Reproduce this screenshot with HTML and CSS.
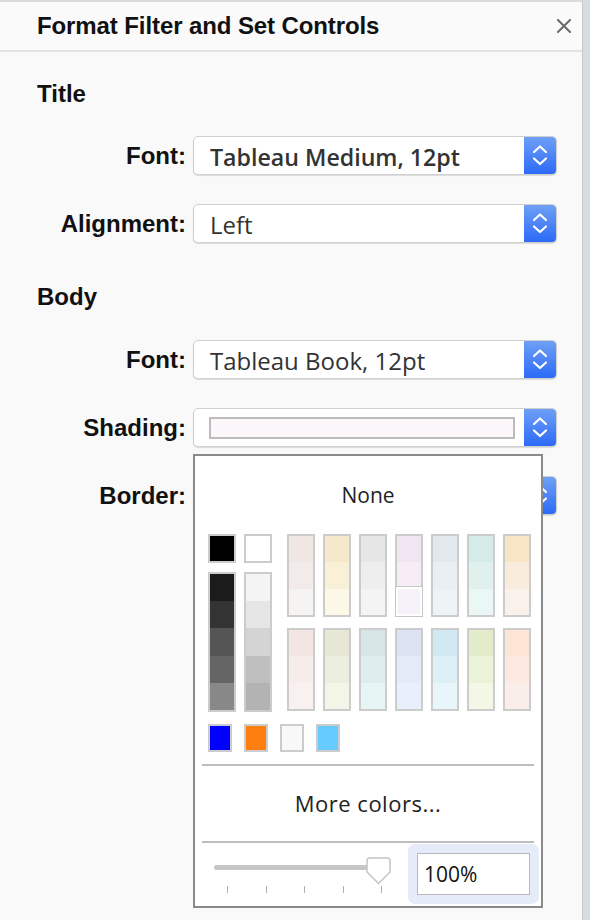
FILE: index.html
```html
<!DOCTYPE html>
<html>
<head>
<meta charset="utf-8">
<link rel="stylesheet" href="styles.css">
</head>
<body>
<div class="panel">
  <header class="head">
    <h1 class="head-title">Format Filter and Set Controls</h1>
    <button class="close" aria-label="Close">
      <svg width="14" height="14" viewBox="0 0 14 14"><path d="M1 1 L13 13 M13 1 L1 13" stroke="#6a6a6a" stroke-width="2" stroke-linecap="square"/></svg>
    </button>
  </header>

  <section class="group group-title">
    <h2 class="group-head">Title</h2>
    <div class="row">
      <label class="row-label">Font:</label>
      <div class="select">
        <span class="select-value strong">Tableau Medium, 12pt</span>
        <span class="stepper"><svg width="32" height="37" viewBox="0 0 32 37"><path d="M10 15 L16 9.5 L22 15 M10 21.5 L16 27 L22 21.5" fill="none" stroke="#fff" stroke-width="2.2" stroke-linecap="round" stroke-linejoin="round"/></svg></span>
      </div>
    </div>
    <div class="row">
      <label class="row-label">Alignment:</label>
      <div class="select">
        <span class="select-value">Left</span>
        <span class="stepper"><svg width="32" height="37" viewBox="0 0 32 37"><path d="M10 15 L16 9.5 L22 15 M10 21.5 L16 27 L22 21.5" fill="none" stroke="#fff" stroke-width="2.2" stroke-linecap="round" stroke-linejoin="round"/></svg></span>
      </div>
    </div>
  </section>

  <section class="group group-body">
    <h2 class="group-head">Body</h2>
    <div class="row">
      <label class="row-label">Font:</label>
      <div class="select">
        <span class="select-value">Tableau Book, 12pt</span>
        <span class="stepper"><svg width="32" height="37" viewBox="0 0 32 37"><path d="M10 15 L16 9.5 L22 15 M10 21.5 L16 27 L22 21.5" fill="none" stroke="#fff" stroke-width="2.2" stroke-linecap="round" stroke-linejoin="round"/></svg></span>
      </div>
    </div>
    <div class="row">
      <label class="row-label">Shading:</label>
      <div class="select">
        <span class="shade-swatch"></span>
        <span class="stepper"><svg width="32" height="37" viewBox="0 0 32 37"><path d="M10 15 L16 9.5 L22 15 M10 21.5 L16 27 L22 21.5" fill="none" stroke="#fff" stroke-width="2.2" stroke-linecap="round" stroke-linejoin="round"/></svg></span>
      </div>
    </div>
    <div class="row">
      <label class="row-label">Border:</label>
      <div class="select">
        <span class="select-value"></span>
        <span class="stepper"><svg width="32" height="37" viewBox="0 0 32 37"><path d="M10 15 L16 9.5 L22 15 M10 21.5 L16 27 L22 21.5" fill="none" stroke="#fff" stroke-width="2.2" stroke-linecap="round" stroke-linejoin="round"/></svg></span>
      </div>
    </div>
  </section>

  <div class="popup">
    <div class="popup-none">None</div>
    <div class="palette">
      <div class="pcol">
        <div class="sw sw-single" style="background:#000"></div>
        <div class="sw sw-tall">
          <i style="background:#1b1b1b"></i><i style="background:#333"></i><i style="background:#555"></i><i style="background:#656565"></i><i style="background:#888"></i>
        </div>
      </div>
      <div class="pcol">
        <div class="sw sw-single" style="background:#fff"></div>
        <div class="sw sw-tall">
          <i style="background:#f4f4f4"></i><i style="background:#e6e6e6"></i><i style="background:#d4d4d4"></i><i style="background:#bfbfbf"></i><i style="background:#b3b3b3"></i>
        </div>
      </div>
      <div class="tints">
        <div class="tint-row">
          <div class="sw sw-tint"><i style="background:#f0e7e2"></i><i style="background:#f3ebe9"></i><i style="background:#f5f4f3"></i></div>
          <div class="sw sw-tint"><i style="background:#f6e9cb"></i><i style="background:#f9f0d8"></i><i style="background:#fdf7e8"></i></div>
          <div class="sw sw-tint"><i style="background:#e6e6e6"></i><i style="background:#eeeeee"></i><i style="background:#f4f4f4"></i></div>
          <div class="sw sw-tint"><i style="background:#f2e5f2"></i><i style="background:#f5ecf5"></i><i class="selected" style="background:#f7f1f9"></i></div>
          <div class="sw sw-tint"><i style="background:#e2e9ee"></i><i style="background:#e9eff3"></i><i style="background:#eef4f6"></i></div>
          <div class="sw sw-tint"><i style="background:#d4ebe7"></i><i style="background:#dff0ed"></i><i style="background:#eaf7f4"></i></div>
          <div class="sw sw-tint"><i style="background:#f7e5c6"></i><i style="background:#f8ecdc"></i><i style="background:#f9f1ea"></i></div>
        </div>
        <div class="tint-row">
          <div class="sw sw-tint"><i style="background:#f3e6e2"></i><i style="background:#f6ecea"></i><i style="background:#f9f1ef"></i></div>
          <div class="sw sw-tint"><i style="background:#e6e8d5"></i><i style="background:#ecefdf"></i><i style="background:#f4f5e9"></i></div>
          <div class="sw sw-tint"><i style="background:#d7e5e6"></i><i style="background:#e0edee"></i><i style="background:#e8f5f5"></i></div>
          <div class="sw sw-tint"><i style="background:#dde3f2"></i><i style="background:#e3eaf8"></i><i style="background:#e9f0fb"></i></div>
          <div class="sw sw-tint"><i style="background:#d1e9f2"></i><i style="background:#ddf0f7"></i><i style="background:#e8f5fb"></i></div>
          <div class="sw sw-tint"><i style="background:#e2eccb"></i><i style="background:#eaf2d8"></i><i style="background:#f3f7e6"></i></div>
          <div class="sw sw-tint"><i style="background:#fde5d6"></i><i style="background:#fceae1"></i><i style="background:#f9eeea"></i></div>
        </div>
      </div>
    </div>
    <div class="recent">
      <div class="sw sw-small" style="background:#0000ff"></div>
      <div class="sw sw-small" style="background:#ff7f0e"></div>
      <div class="sw sw-small" style="background:#f8f8f8"></div>
      <div class="sw sw-small" style="background:#66ccff"></div>
    </div>
    <div class="sep"></div>
    <div class="more">More colors...</div>
    <div class="sep"></div>
    <div class="opacity">
      <div class="slider">
        <div class="track"></div>
        <div class="ticks"><b></b><b></b><b></b><b></b><b></b></div>
        <svg class="thumb" width="25" height="28" viewBox="0 0 25 28"><path d="M3.5 1 H21.5 A2.5 2.5 0 0 1 24 3.5 V15 L12.5 26.5 L1 15 V3.5 A2.5 2.5 0 0 1 3.5 1 Z" fill="#fff" stroke="#c4c4c4" stroke-width="1.5"/></svg>
      </div>
      <div class="pct-wrap"><div class="pct">100%</div></div>
    </div>
  </div>
</div>
</body>
</html>
```

FILE: styles.css
```css
html, body {
  margin: 0;
  padding: 0;
  background: #d5dce3;
}
.panel {
  position: relative;
  width: 583px;
  height: 920px;
  box-sizing: border-box;
  background: #f9f9f9;
  border-top: 2px solid #dcdcdc;
  border-right: 1px solid #c8c8c8;
  font-family: "Liberation Sans", Arial, sans-serif;
  color: #111;
}
.head {
  display: flex;
  align-items: center;
  height: 48px;
  border-bottom: 2px solid #e3e3e3;
  padding-left: 37px;
  padding-right: 11px;
  background: #fafafa;
}
.head-title {
  margin: 0;
  font-size: 24px;
  font-weight: bold;
  flex: 1;
  letter-spacing: -0.1px;
}
.close {
  border: 0;
  background: none;
  padding: 0;
  width: 14px;
  height: 14px;
  display: flex;
}
.group-head {
  margin: 0 0 0 37px;
  height: 24px;
  line-height: 24px;
  font-size: 24px;
  font-weight: bold;
}
.group-title { padding-top: 30px; }
.group-body { padding-top: 42px; }
.group-title .group-head { margin-bottom: 30px; }
.group-body .group-head { margin-bottom: 31px; }
.row {
  display: grid;
  grid-template-columns: 186px 364px;
  column-gap: 7px;
  align-items: center;
  margin-bottom: 29px;
}
.row:last-child { margin-bottom: 0; }
.row-label {
  text-align: right;
  font-size: 24px;
  font-weight: bold;
}
.select {
  display: flex;
  align-items: center;
  height: 39px;
  box-sizing: border-box;
  background: #fff;
  border: 1px solid #cfcfcf;
  border-radius: 5px;
  box-shadow: 0 1px 1px rgba(0,0,0,0.12);
  overflow: hidden;
}
.select-value {
  flex: 1;
  padding-left: 16px;
  padding-top: 2px;
  font-family: "Open Sans", "DejaVu Sans", sans-serif;
  font-size: 24px;
  color: #333;
  white-space: nowrap;
}
.select-value.strong { font-weight: 600; font-size: 23.2px; }
.shade-swatch {
  margin-left: 15px;
  width: 306px;
  height: 22px;
  box-sizing: border-box;
  border: 2px solid #bcbcbc;
  background: #fbf6fa;
}
.stepper {
  margin-left: auto;
  width: 32px;
  height: 100%;
  background: linear-gradient(#6fa0f6, #2b6af6);
  display: flex;
}
.popup {
  position: absolute;
  left: 193px;
  top: 452px;
  width: 350px;
  height: 454px;
  box-sizing: border-box;
  border: 2px solid #8a8a8a;
  background: #fff;
  font-family: "Open Sans", "DejaVu Sans", sans-serif;
  color: #222;
}
.popup-none {
  margin-top: 24px;
  height: 30px;
  line-height: 30px;
  text-align: center;
  font-size: 21px;
}
.palette {
  display: flex;
  margin: 24px 0 0 13px;
}
.pcol {
  display: flex;
  flex-direction: column;
  gap: 9px;
  margin-right: 8px;
}
.pcol:nth-child(2) { margin-right: 15px; }
.sw {
  box-sizing: border-box;
  border: 2px solid #cccccc;
  display: flex;
  flex-direction: column;
}
.sw i { flex: 1; display: block; }
.sw-single { width: 28px; height: 29px; }
.sw-tall { width: 28px; height: 140px; }
.tints {
  display: flex;
  flex-direction: column;
  gap: 11px;
}
.tint-row {
  display: flex;
  gap: 8px;
}
.sw-tint { width: 28px; height: 83px; }
.sw-tint i.selected {
  flex: 1.05;
  outline: 1px solid #c6c6c6;
  outline-offset: -1px;
  margin: -2px;
  border: 2px solid #fff;
  box-sizing: border-box;
  box-shadow: inset 0 0 0 1px #fff;
}
.recent {
  display: flex;
  gap: 12px;
  margin: 12px 0 0 13px;
}
.sw-small { width: 24px; height: 28px; }
.sep {
  height: 2px;
  margin: 0 7px;
  background: #bdbdbd;
}
.recent + .sep { margin-top: 12px; }
.more {
  height: 75px;
  line-height: 75px;
  text-align: center;
  font-size: 22px;
  letter-spacing: 0.5px;
}
.opacity {
  display: flex;
  height: 63px;
}
.slider {
  position: relative;
  width: 180px;
  margin-left: 19px;
}
.track {
  margin-top: 22px;
  width: 165px;
  height: 5px;
  border-radius: 3px;
  background: #c6c6c6;
}
.ticks {
  display: flex;
  justify-content: space-between;
  margin: 16px 0 0 13px;
  width: 155px;
}
.ticks b {
  display: block;
  width: 1px;
  height: 7px;
  background: #b0b0b0;
}
.thumb {
  position: absolute;
  left: 152px;
  top: 14px;
}
.pct-wrap {
  margin: 1px 2px 2px auto;
  width: 131px;
  box-sizing: border-box;
  padding: 9px;
  background: #e5ebf8;
  border-radius: 7px;
}
.pct {
  height: 42px;
  box-sizing: border-box;
  border: 1px solid #b8b8b8;
  background: #fff;
  padding-left: 6px;
  line-height: 40px;
  font-size: 21px;
  color: #111;
}
```
